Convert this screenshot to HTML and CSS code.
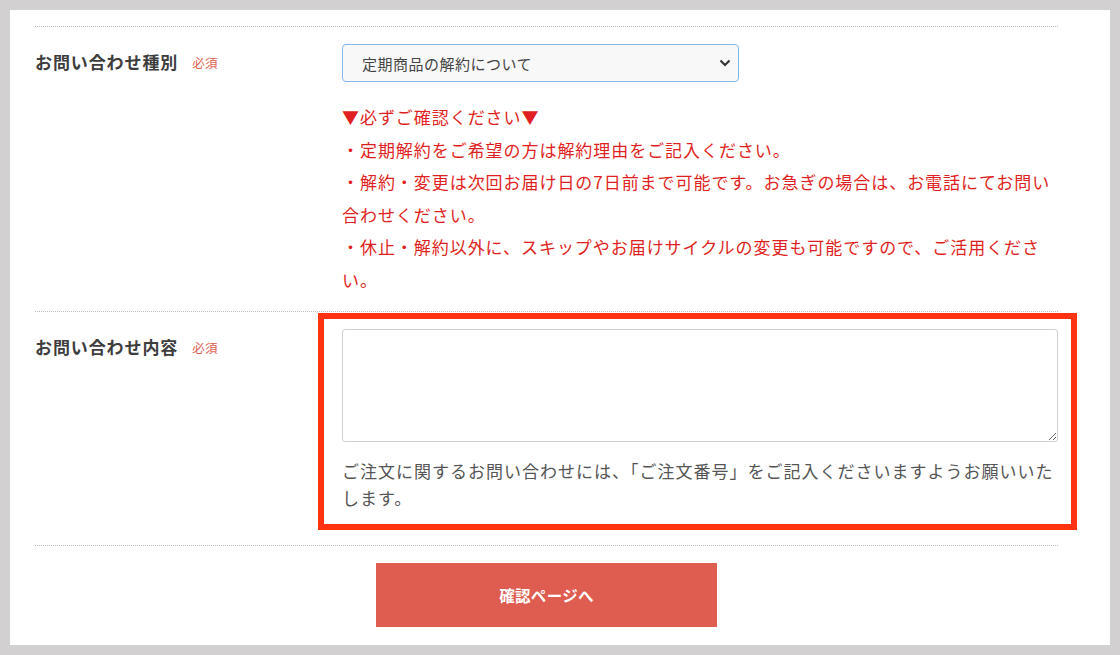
FILE: index.html
```html
<!DOCTYPE html>
<html lang="ja">
<head>
    <meta charset="UTF-8">
    <meta name="viewport" content="width=device-width, initial-scale=1.0">
    <title>お問い合わせ</title>
    <link rel="stylesheet" href="styles.css">
</head>
<body>

<div class="panel">
    <form class="form">
        <div class="row">
            <div class="label">お問い合わせ種別<span class="req">必須</span></div>
            <div class="field">
                <div class="select-wrap">
                    <select class="select">
                        <option>定期商品の解約について</option>
                    </select>
                    <svg class="chev" width="12" height="8" viewBox="0 0 12 8"><path d="M1.5 1.5 L6 6 L10.5 1.5" fill="none" stroke="#333" stroke-width="2"/></svg>
                </div>
                <div class="notice">
                    <p>▼必ずご確認ください▼</p>
                    <p>・定期解約をご希望の方は解約理由をご記入ください。</p>
                    <p>・解約・変更は次回お届け日の7日前まで可能です。お急ぎの場合は、お電話にてお問い合わせください。</p>
                    <p>・休止・解約以外に、スキップやお届けサイクルの変更も可能ですので、ご活用ください。</p>
                </div>
            </div>
        </div>

        <div class="row row-msg">
            <div class="label">お問い合わせ内容<span class="req">必須</span></div>
            <div class="field field-mark">
                <textarea class="textarea"></textarea>
                <p class="hint">ご注文に関するお問い合わせには、「ご注文番号」をご記入くださいますようお願いいたします。</p>
            </div>
        </div>

        <div class="submit-row">
            <button type="button" class="btn">確認ページへ</button>
        </div>
    </form>
</div>

</body>
</html>
```

FILE: styles.css
```css
/* Reset */
* {
    margin: 0;
    padding: 0;
    box-sizing: border-box;
}
body {
    font-family: "Noto Sans CJK JP", "Noto Sans", sans-serif;
    background: #d2d0d1;
    color: #3b3b3b;
    padding: 10px;
}
/* Panel */
.panel {
    background: #fff;
    height: 635px;
    padding: 16px 52px 18px 25px;
}
/* Form rows */
.row {
    display: grid;
    grid-template-columns: 307px 716px;
    border-top: 1px dotted #bdbdbd;
    padding: 17px 0 14px;
}
.row-msg {
    padding-bottom: 34px;
}
.label {
    font-size: 17px;
    font-weight: bold;
    letter-spacing: 0.9px;
    line-height: 36px;
    color: #3d3d3d;
}
.req {
    font-size: 12.5px;
    font-weight: normal;
    letter-spacing: 0.3px;
    color: #e0604f;
    margin-left: 14px;
    vertical-align: 1px;
}
/* Select */
.select-wrap {
    position: relative;
    width: 397px;
}
.select {
    appearance: none;
    -webkit-appearance: none;
    display: block;
    width: 100%;
    height: 38px;
    padding: 0 30px 0 19px;
    font-family: inherit;
    font-size: 15px;
    letter-spacing: 0.5px;
    color: #444;
    background: #f8f8f8;
    border: 1px solid #86b8e8;
    border-radius: 4px;
}
.chev {
    position: absolute;
    right: 8px;
    top: 15px;
    pointer-events: none;
}
/* Notice */
.notice {
    margin-top: 19px;
    color: #df1f22;
    font-size: 17px;
    letter-spacing: 0.95px;
    line-height: 32.6px;
}
/* Textarea */
.field-mark {
    position: relative;
}
.field-mark::after {
    content: '';
    position: absolute;
    top: -16px;
    left: -24px;
    right: -19px;
    bottom: -19px;
    border: 6px solid #ff3311;
    pointer-events: none;
}
.textarea {
    display: block;
    width: 100%;
    height: 113px;
    border: 1px solid #cfcfcf;
    border-radius: 3px;
    background: #fff;
    font-family: inherit;
    font-size: 15px;
}
.hint {
    margin-top: 15px;
    font-size: 17px;
    letter-spacing: 1px;
    line-height: 27px;
    color: #555;
}
/* Submit */
.submit-row {
    border-top: 1px dotted #bdbdbd;
    padding-top: 17px;
}
.btn {
    display: block;
    margin: 0 auto;
    width: 341px;
    height: 64px;
    background: #df5c50;
    color: #fff;
    border: none;
    font-family: inherit;
    font-size: 15.5px;
    font-weight: bold;
    letter-spacing: 0.3px;
    cursor: pointer;
}
```
